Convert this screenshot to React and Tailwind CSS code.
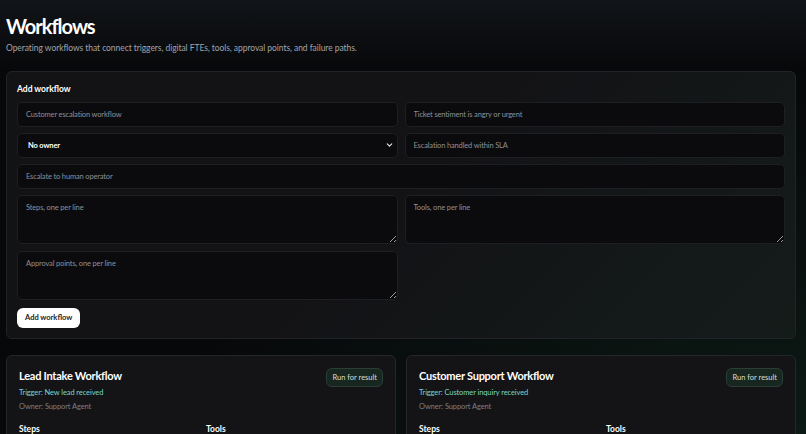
import React from 'react';
import { ChevronDown } from 'lucide-react';

const workflows = [
  {
    name: 'Lead Intake Workflow',
    trigger: 'New lead received',
    owner: 'Support Agent',
    steps: ['Capture lead details', 'Qualify lead', 'Route to sales'],
    tools: ['CRM', 'Email'],
  },
  {
    name: 'Customer Support Workflow',
    trigger: 'Customer inquiry received',
    owner: 'Support Agent',
    steps: ['Classify inquiry', 'Draft response', 'Send reply'],
    tools: ['Helpdesk', 'Knowledge base'],
  },
];

const field =
  'block w-full rounded-[5px] border border-[#1e1f24] bg-[#0b0b0e] px-[8px] text-[7.5px] tracking-[-0.15px] text-gray-200 placeholder:text-[#8e8f96] outline-none';

const WorkflowCard = ({ wf }) => (
  <div className="rounded-[6px] border border-[#25262b] bg-[#141417] px-[12px] pt-[11px] pb-4">
    <div className="flex items-start justify-between">
      <div>
        <h3 className="text-[11px] tracking-[-0.25px] font-bold text-white leading-[16px] mt-[1px]">{wf.name}</h3>
        <p className="mt-[4px] text-[7.5px] tracking-[-0.1px] leading-[10px] text-[#76d6c8]">Trigger: {wf.trigger}</p>
        <p className="mt-[4px] text-[7.5px] tracking-[-0.1px] leading-[10px] text-[#7d7e85]">Owner: {wf.owner}</p>
      </div>
      <button className="mt-[1px] rounded-[6px] border border-[#2a3d36] bg-[#17271f] px-[5px] h-[19px] text-[7.5px] text-[#d4ddd9]">
        Run for result
      </button>
    </div>
    <div className="mt-[11px] grid grid-cols-2 gap-[10px]">
      <div>
        <h4 className="text-[8.5px] font-bold text-white leading-[12px]">Steps</h4>
        <ul className="mt-1 space-y-1 text-[7.5px] text-gray-400">
          {wf.steps.map((s) => (
            <li key={s}>{s}</li>
          ))}
        </ul>
      </div>
      <div>
        <h4 className="text-[8.5px] font-bold text-white leading-[12px]">Tools</h4>
        <ul className="mt-1 space-y-1 text-[7.5px] text-gray-400">
          {wf.tools.map((s) => (
            <li key={s}>{s}</li>
          ))}
        </ul>
      </div>
    </div>
  </div>
);

export default function App() {
  return (
    <div
      className="min-h-screen w-full bg-[#07080a] bg-[radial-gradient(ellipse_at_100%_80%,rgba(20,60,40,0.35),transparent_55%),linear-gradient(to_bottom,#111418_0%,#07080a_70px)] pl-[6px] pr-[10px] pt-[13px] pb-10"
      style={{ fontFamily: 'Lato, "Open Sans", sans-serif' }}
    >
      <h1 className="text-[20px] tracking-[-1px] font-bold leading-[26px] text-white">Workflows</h1>
      <p className="mt-[3px] text-[8.5px] tracking-[-0.06px] text-[#a1a3aa]">
        Operating workflows that connect triggers, digital FTEs, tools, approval points, and failure paths.
      </p>

      <div className="mt-[16px] rounded-[6px] border border-[#222328] bg-[#131316] bg-[linear-gradient(135deg,transparent_50%,rgba(22,45,34,0.35))] px-[10px] pt-[11px] pb-[10px]">
        <h2 className="text-[8.5px] font-bold text-white leading-[12px]">Add workflow</h2>
        <div className="mt-[7px] grid grid-cols-2 gap-x-[7px] gap-y-[6px]">
          <input className={`${field} h-[25px]`} placeholder="Customer escalation workflow" />
          <input className={`${field} h-[25px]`} placeholder="Ticket sentiment is angry or urgent" />
          <div className="relative">
            <select className={`${field} h-[25px] appearance-none font-bold text-white px-[10px]`}>
              <option>No owner</option>
            </select>
            <ChevronDown
              size={9}
              strokeWidth={3}
              className="pointer-events-none absolute right-[4px] top-1/2 -translate-y-1/2 text-gray-200"
            />
          </div>
          <input className={`${field} h-[25px]`} placeholder="Escalation handled within SLA" />
          <input className={`${field} h-[25px] col-span-2`} placeholder="Escalate to human operator" />
          <textarea className={`${field} h-[49px] pt-[6px]`} placeholder="Steps, one per line" />
          <textarea className={`${field} h-[49px] pt-[6px]`} placeholder="Tools, one per line" />
          <textarea
            className={`${field} h-[49px] pt-[6px] mt-[1px]`}
            placeholder="Approval points, one per line"
          />
        </div>
        <button className="block mt-[8px] h-[20px] rounded-[6px] bg-white px-[8px] text-[7.5px] font-bold text-[#1b1b1f]">
          Add workflow
        </button>
      </div>

      <div className="mt-[16px] grid grid-cols-2 gap-[10px]">
        {workflows.map((wf) => (
          <WorkflowCard key={wf.name} wf={wf} />
        ))}
      </div>
    </div>
  );
}
